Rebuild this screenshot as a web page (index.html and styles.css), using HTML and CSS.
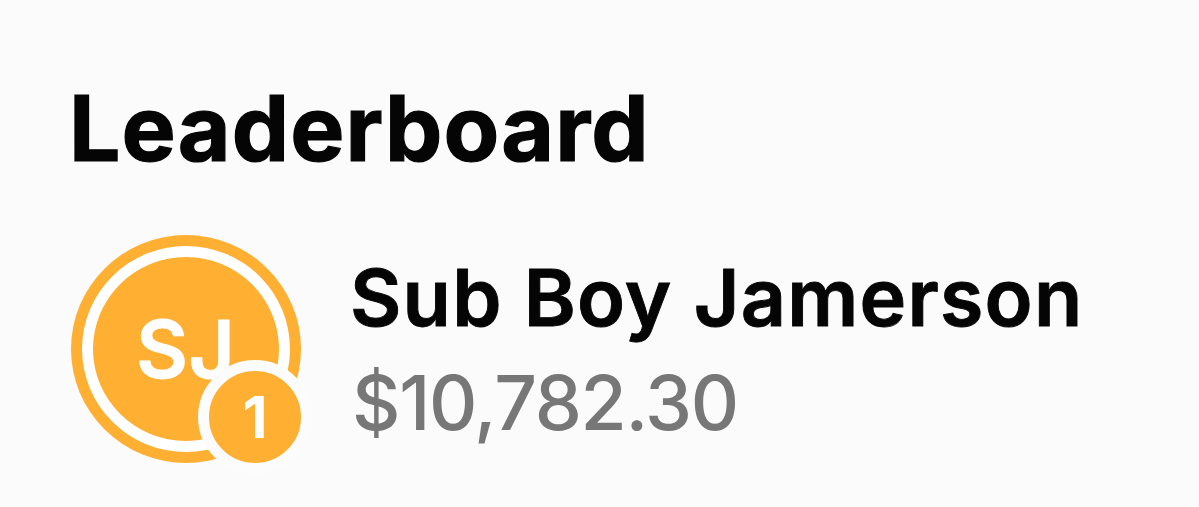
FILE: index.html
```html
<!DOCTYPE html>
<html lang="en">
<head>
  <meta charset="UTF-8">
  <title>Leaderboard</title>
  <link rel="stylesheet" href="styles.css">
</head>
<body>
  <main class="leaderboard">
    <h1 class="title">Leaderboard</h1>

    <div class="player">
      <div class="avatar">
        <div class="avatar-inner">SJ</div>
        <span class="rank">1</span>
      </div>
      <div class="details">
        <div class="name">Sub Boy Jamerson</div>
        <div class="amount">$10,782.30</div>
      </div>
    </div>
  </main>
</body>
</html>
```
FILE: styles.css
```css
* {
  box-sizing: border-box;
}

body {
  margin: 0;
  background: #fbfbfc;
  color: #050505;
  font-family: Inter, "Liberation Sans", sans-serif;
}

.leaderboard {
  height: 507px;
  padding: 74px 70px 0 71px;
  overflow: hidden;
}

.title {
  margin: 0 0 0 -2px;
  font-size: 91px;
  font-weight: 700;
  line-height: 108px;
  letter-spacing: 1.1px;
  -webkit-text-stroke: 1.2px #050505;
}

.player {
  display: flex;
  margin-top: 53px;
}

/* orange ring around the initials */
.avatar {
  position: relative;
  flex: none;
  width: 230px;
  height: 228px;
  padding: 11px;
  border-radius: 50%;
  background: #ffb033;
}

.avatar-inner {
  height: 100%;
  padding-top: 54px;
  padding-left: 43px;
  border: 11px solid #fff;
  border-radius: 50%;
  color: #fff;
  font-size: 80px;
  font-weight: 600;
  line-height: 76px;
  letter-spacing: 0.5px;
  white-space: nowrap;
  -webkit-text-stroke: 0.8px #fff;
}

.rank {
  position: absolute;
  right: -11px;
  bottom: -11px;
  width: 114px;
  height: 114px;
  border: 11px solid #fcfcfc;
  border-radius: 50%;
  background: #ffb033;
  color: #fff;
  font-size: 58px;
  font-weight: 700;
  line-height: 92px;
  text-align: center;
}

.details {
  padding-top: 10px;
  margin-left: 49px;
  white-space: nowrap;
}

.name {
  font-size: 79px;
  font-weight: 600;
  line-height: 104px;
  letter-spacing: 1.2px;
  -webkit-text-stroke: 0.9px #050505;
}

.amount {
  padding-left: 2px;
  color: #777;
  font-size: 75px;
  font-weight: 500;
  line-height: 108px;
  letter-spacing: -1.3px;
}
```
